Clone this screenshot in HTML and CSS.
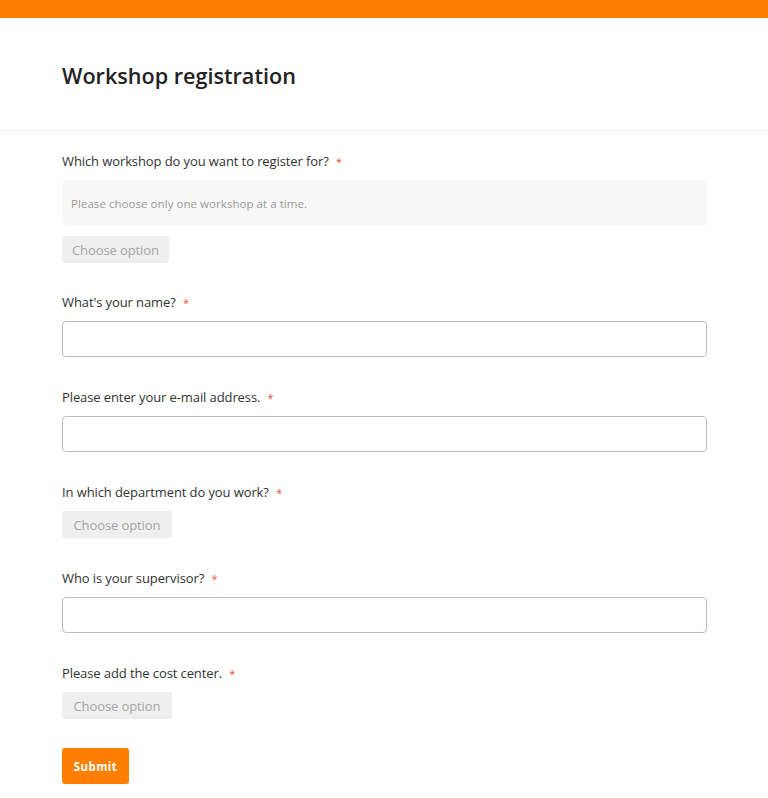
FILE: index.html
```html
<!DOCTYPE html>
<html lang="en">
<head>
<meta charset="utf-8">
<title>Workshop registration</title>
<link rel="stylesheet" href="styles.css">
</head>
<body>
<div class="topbar"></div>
<header class="header">
  <h1 class="title">Workshop registration</h1>
</header>
<form class="form">
  <div class="field field-tight">
    <label class="label">Which workshop do you want to register for? <span class="req">*</span></label>
    <div class="help">Please choose only one workshop at a time.</div>
    <button type="button" class="choose">Choose option</button>
  </div>
  <div class="field">
    <label class="label">What's your name? <span class="req">*</span></label>
    <input class="input" type="text">
  </div>
  <div class="field">
    <label class="label">Please enter your e-mail address. <span class="req">*</span></label>
    <input class="input" type="text">
  </div>
  <div class="field">
    <label class="label">In which department do you work? <span class="req">*</span></label>
    <button type="button" class="choose wide">Choose option</button>
  </div>
  <div class="field">
    <label class="label">Who is your supervisor? <span class="req">*</span></label>
    <input class="input" type="text">
  </div>
  <div class="field">
    <label class="label">Please add the cost center. <span class="req">*</span></label>
    <button type="button" class="choose wide">Choose option</button>
  </div>
  <button type="button" class="submit">Submit</button>
</form>
</body>
</html>
```
FILE: styles.css
```css
* { box-sizing: border-box; }
body {
  margin: 0;
  background: #fff;
  font-family: "Open Sans", "Noto Sans", "Liberation Sans", sans-serif;
  color: #333;
}
.topbar {
  height: 18px;
  background: #ff8000;
}
.header {
  padding: 43px 62px 39px;
  border-bottom: 1px solid #eeeeee;
}
.title {
  margin: 0;
  font-size: 21.6px;
  line-height: 30px;
  font-weight: 600;
  color: #222;
}
.form {
  padding: 19px 61px 40px 62px;
  display: flex;
  flex-direction: column;
  align-items: flex-start;
}
.field {
  width: 100%;
  margin-bottom: 29px;
  display: flex;
  flex-direction: column;
  align-items: flex-start;
}
.field-tight { margin-bottom: 28px; }
.label {
  display: block;
  height: 22px;
  font-size: 13px;
  line-height: 22px;
  color: #333;
  margin-bottom: 8px;
  letter-spacing: -0.1px;
}
.req {
  color: #e8543a;
  margin-left: 4px;
  font-size: 11px;
  line-height: 1;
}
.help {
  width: 100%;
  height: 46px;
  background: #f8f8f8;
  border-radius: 5px;
  padding: 0 9px;
  display: flex;
  align-items: center;
  font-size: 11.5px;
  color: #999;
  margin-bottom: 10px;
  letter-spacing: 0.05px;
}
.choose {
  height: 27px;
  padding: 0 10px;
  border: none;
  border-radius: 3px;
  background: #efefef;
  color: #a5a5a5;
  font-family: inherit;
  font-size: 13px;
  letter-spacing: -0.1px;
  cursor: pointer;
}
.choose.wide { padding: 0 11.5px; }
.input {
  width: 100%;
  height: 36px;
  border: 1px solid #bdbdbd;
  border-radius: 4px;
  background: #fff;
  font-family: inherit;
  font-size: 13px;
  padding: 0 10px;
}
.submit {
  width: 67px;
  height: 36px;
  border: none;
  border-radius: 3px;
  background: #ff8000;
  color: #fff;
  font-family: inherit;
  font-size: 11.5px;
  font-weight: 700;
  letter-spacing: 0.4px;
  cursor: pointer;
}
```
